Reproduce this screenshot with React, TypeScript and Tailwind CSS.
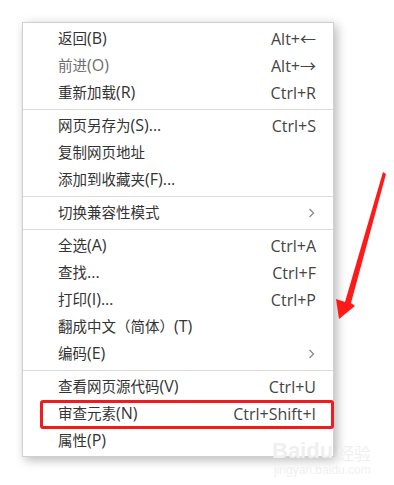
import React from "react";

type Item = { label: string; shortcut?: string; sub?: boolean; disabled?: boolean };

const groups: Item[][] = [
  [
    { label: "返回(B)", shortcut: "Alt+←" },
    { label: "前进(O)", shortcut: "Alt+→", disabled: true },
    { label: "重新加载(R)", shortcut: "Ctrl+R" },
  ],
  [
    { label: "网页另存为(S)...", shortcut: "Ctrl+S" },
    { label: "复制网页地址" },
    { label: "添加到收藏夹(F)..." },
  ],
  [{ label: "切换兼容性模式", sub: true }],
  [
    { label: "全选(A)", shortcut: "Ctrl+A" },
    { label: "查找...", shortcut: "Ctrl+F" },
    { label: "打印(I)...", shortcut: "Ctrl+P" },
    { label: "翻成中文（简体）(T)" },
    { label: "编码(E)", sub: true },
  ],
  [
    { label: "查看网页源代码(V)", shortcut: "Ctrl+U" },
    { label: "审查元素(N)", shortcut: "Ctrl+Shift+I" },
    { label: "属性(P)" },
  ],
];

function Label({ text }: { text: string }) {
  const parts = text.split(/([\u4e00-\u9fff\uff08\uff09]+)/).filter(Boolean);
  return (
    <span>
      {parts.map((p, i) =>
        /[\u4e00-\u9fff\uff08\uff09]/.test(p) ? (
          <span key={i} className="text-[14.5px]">{p}</span>
        ) : (
          <span key={i} className="text-[16px]">{p}</span>
        )
      )}
    </span>
  );
}

function Chevron() {
  return (
    <svg width="7" height="10" viewBox="0 0 7 10" className="mr-[1px]">
      <polyline points="1.5,1 5.5,5 1.5,9" fill="none" stroke="#8a8a8a" strokeWidth="1.3" />
    </svg>
  );
}

export default function App() {
  return (
    <div
      className="relative w-[394px] h-[485px] bg-white overflow-hidden"
      style={{ fontFamily: '"Open Sans", "Noto Sans CJK SC", sans-serif' }}
    >
      <div className="ml-[22px] mt-[22px] w-[312px] border border-[#cfcfcf] bg-white py-[2px] shadow-[3px_3px_10px_rgba(0,0,0,0.28)]">
        {groups.map((g, gi) => (
          <React.Fragment key={gi}>
            {gi > 0 && (
              <div className="h-[6px] flex items-center">
                <div className="h-px w-full bg-[#dcdcdc]" />
              </div>
            )}
            {g.map((it) => (
              <div
                key={it.label}
                className={`h-[27px] flex items-center justify-between pl-[35px] pr-[17px] leading-none ${
                  it.disabled ? "text-[#6e6e6e]" : "text-[#333333]"
                }`}
              >
                <Label text={it.label} />
                {it.shortcut && <span className="text-[16px] text-[#444]">{it.shortcut}</span>}
                {it.sub && <Chevron />}
              </div>
            ))}
          </React.Fragment>
        ))}
      </div>

      {/* red highlight box */}
      <div className="absolute left-[40px] top-[400px] w-[294px] h-[29px] border-[3px] border-[#ee1c1c] rounded-[3px]" />

      {/* red arrow */}
      <svg className="absolute left-0 top-0" width="394" height="485" viewBox="0 0 394 485">
        <polygon
          points="383,172 386,174 351,303 355,306 339,319 336,299 345,302"
          fill="#ff1a1a"
        />
      </svg>

      {/* watermark */}
      <div className="absolute left-[272px] top-[440px] flex items-end gap-[4px] text-[#efefef] select-none">
        <span className="text-[22px] font-bold leading-none" style={{ fontFamily: '"Liberation Sans", sans-serif' }}>
          Baidu
        </span>
        <span className="text-[17px] leading-none">经验</span>
      </div>
      <div
        className="absolute left-[274px] top-[464px] text-[12px] leading-none text-[#f0f0f0]"
        style={{ fontFamily: '"Liberation Sans", sans-serif' }}
      >
        jingyan.baidu.com
      </div>
    </div>
  );
}
